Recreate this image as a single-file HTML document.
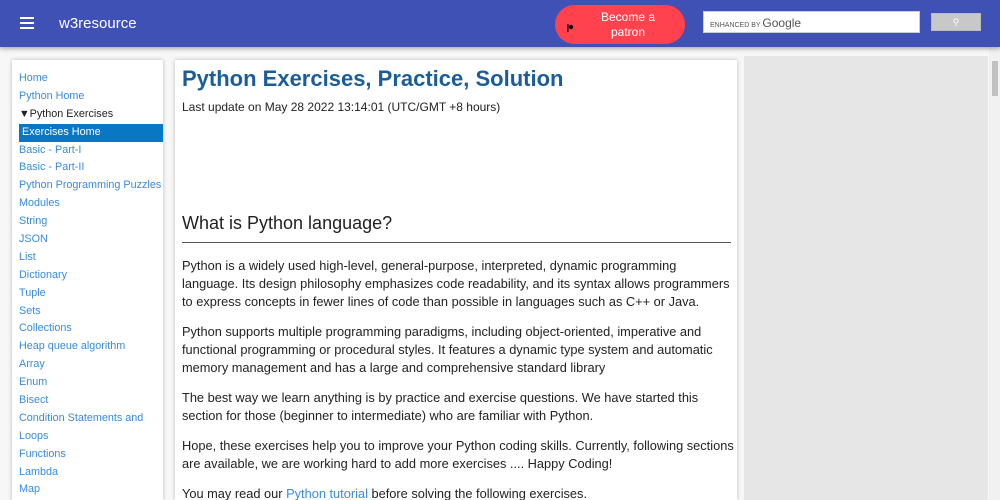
<!DOCTYPE html>
<html><head><style>
*{margin:0;padding:0;box-sizing:border-box}
html,body{width:1000px;height:500px;overflow:hidden}
body{background:#f7f7f7;font-family:"Liberation Sans",Arial,sans-serif;position:relative}
.hdr{position:absolute;left:0;top:0;width:1000px;height:47px;background:#3f51b5;box-shadow:0 2px 4px rgba(0,0,0,.3);z-index:2}
.burger{position:absolute;left:20px;top:17px;width:14px;height:12px}
.burger i{display:block;height:2px;background:#fff;margin-bottom:3px}
.logo{position:absolute;left:59px;top:15px;color:#fff;font-size:15px}
.patron{position:absolute;left:555px;top:5px;width:130px;height:39px;background:#ff424d;border-radius:20px;color:#fff;font-size:12px;text-align:center;line-height:15px;padding-top:5px;padding-left:16px}
.patron b{position:absolute;left:12px;top:16px;width:6px;height:8px}
.search{position:absolute;left:703px;top:11px;width:217px;height:22px;background:#fff;border:1px solid #ccc;font-size:7px;color:#555;padding:4px 6px}
.search span{font-size:12px;color:#555}
.sbtn{position:absolute;left:931px;top:13px;width:50px;height:18px;background:#c8c8c8;border:1px solid #bbb;color:#fff;font-size:9px;text-align:center;line-height:16px}
.side{position:absolute;left:12px;top:60px;width:151px;height:440px;background:#fff;box-shadow:0 0 4px rgba(0,0,0,.25);padding-top:10px;overflow:hidden}
.side div{font-size:10.8px;color:#3a8bd8;height:17.9px;line-height:17.9px;padding-left:7px;white-space:nowrap;overflow:hidden}
.side .blk{color:#222}
.side .act{background:#0a77c5;color:#fff;margin-left:7px;padding-left:3px}
.main{position:absolute;left:175px;top:60px;width:562px;height:440px;background:#fff;box-shadow:0 0 4px rgba(0,0,0,.25);padding:6px 7px;overflow:hidden}
h1{font-size:22px;color:#1b5d9b;font-weight:bold;margin-bottom:8px}
.upd{font-size:12px;color:#222}
h2{position:absolute;left:7px;top:153px;width:549px;font-size:18px;font-weight:normal;color:#222;padding-bottom:8px;border-bottom:1px solid #555}
.txt{position:absolute;left:7px;top:197px;width:560px;font-size:12.8px;color:#222;line-height:18px;white-space:nowrap}
.txt p{margin-bottom:12px}
.txt a{color:#3a8bd8}
.gray{position:absolute;left:744px;top:56px;width:244px;height:444px;background:#e6e6e6}
.sb{position:absolute;left:989px;top:47px;width:11px;height:453px;background:#f1f1f1}
.sb i{position:absolute;left:3px;top:14px;width:6px;height:35px;background:#c1c1c1}
</style></head><body>
<div class="hdr">
<div class="burger"><i></i><i></i><i></i></div>
<div class="logo">w3resource</div>
<div class="patron"><b><svg width="6" height="8"><rect x="0" y="0" width="1.5" height="8" fill="#000"/><circle cx="4" cy="3" r="2.2" fill="#000"/></svg></b>Become a<br>patron</div>
<div class="search">ENHANCED BY <span>Google</span></div>
<div class="sbtn">&#9906;</div>
</div>
<div class="side">
<div>Home</div><div>Python Home</div><div class="blk">▼Python Exercises</div><div class="act">Exercises Home</div>
<div>Basic - Part-I</div><div>Basic - Part-II</div><div>Python Programming Puzzles</div><div>Modules</div><div>String</div><div>JSON</div><div>List</div><div>Dictionary</div><div>Tuple</div><div>Sets</div><div>Collections</div><div>Heap queue algorithm</div><div>Array</div><div>Enum</div><div>Bisect</div><div>Condition Statements and</div><div>Loops</div><div>Functions</div><div>Lambda</div><div>Map</div>
</div>
<div class="main">
<h1>Python Exercises, Practice, Solution</h1>
<div class="upd">Last update on May 28 2022 13:14:01 (UTC/GMT +8 hours)</div>
<h2>What is Python language?</h2>
<div class="txt">
<p>Python is a widely used high-level, general-purpose, interpreted, dynamic programming<br>language. Its design philosophy emphasizes code readability, and its syntax allows programmers<br>to express concepts in fewer lines of code than possible in languages such as C++ or Java.</p>
<p>Python supports multiple programming paradigms, including object-oriented, imperative and<br>functional programming or procedural styles. It features a dynamic type system and automatic<br>memory management and has a large and comprehensive standard library</p>
<p>The best way we learn anything is by practice and exercise questions. We have started this<br>section for those (beginner to intermediate) who are familiar with Python.</p>
<p>Hope, these exercises help you to improve your Python coding skills. Currently, following sections<br>are available, we are working hard to add more exercises .... Happy Coding!</p>
<p>You may read our <a>Python tutorial</a> before solving the following exercises.</p>
</div>
</div>
<div class="gray"></div>
<div class="sb"><i></i></div>
</body></html>
